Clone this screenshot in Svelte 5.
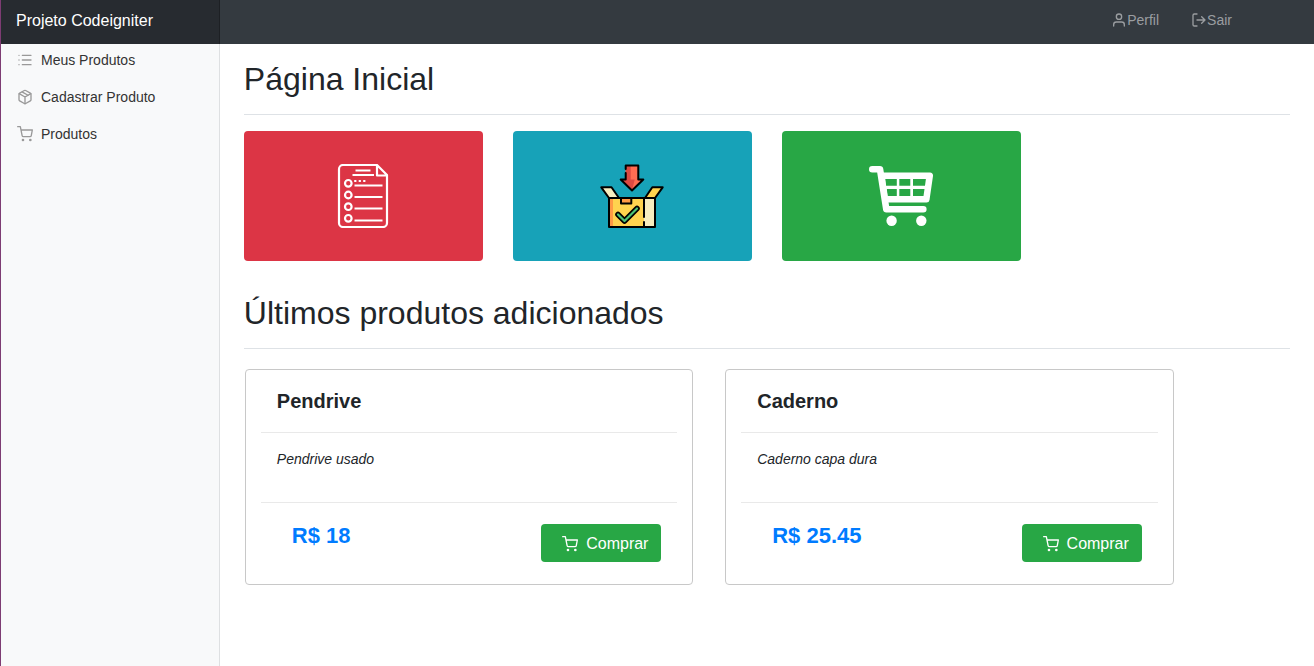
<script>
  const menu = [
    { label: 'Meus Produtos', icon: 'list' },
    { label: 'Cadastrar Produto', icon: 'package' },
    { label: 'Produtos', icon: 'cart' }
  ];
  const products = [
    { name: 'Pendrive', description: 'Pendrive usado', price: '18' },
    { name: 'Caderno', description: 'Caderno capa dura', price: '25.45' }
  ];
</script>

{#snippet icon(name)}
  <svg class="icon" viewBox="0 0 24 24" aria-hidden="true">
    {#if name === 'list'}
      <path d="M8 5h13M8 12h13M8 19h13M3 5h.01M3 12h.01M3 19h.01" />
    {:else if name === 'package'}
      <path d="M16.5 9.4 7.5 4.21M21 16V8a2 2 0 0 0-1-1.73l-7-4a2 2 0 0 0-2 0l-7 4A2 2 0 0 0 3 8v8a2 2 0 0 0 1 1.73l7 4a2 2 0 0 0 2 0l7-4A2 2 0 0 0 21 16z" />
      <path d="M3.27 6.96 12 12.01l8.73-5.05M12 22.08V12" />
    {:else if name === 'cart'}
      <circle cx="9" cy="21" r="1" />
      <circle cx="20" cy="21" r="1" />
      <path d="M1 1h4l2.68 13.39a2 2 0 0 0 2 1.61h9.72a2 2 0 0 0 2-1.61L23 6H6" />
    {:else if name === 'user'}
      <path d="M20 21v-2a4 4 0 0 0-4-4H8a4 4 0 0 0-4 4v2" />
      <circle cx="12" cy="7" r="4" />
    {:else if name === 'logout'}
      <path d="M9 21H5a2 2 0 0 1-2-2V5a2 2 0 0 1 2-2h4M16 17l5-5-5-5M21 12H9" />
    {/if}
  </svg>
{/snippet}

<div class="page">
  <header>
    <a class="brand" href="#inicio">Projeto Codeigniter</a>
    <nav class="account">
      <a href="#perfil">{@render icon('user')}Perfil</a>
      <a href="#sair">{@render icon('logout')}Sair</a>
    </nav>
  </header>

  <div class="body">
    <nav class="sidebar">
      {#each menu as item}
        <a href="#{item.icon}">{@render icon(item.icon)}{item.label}</a>
      {/each}
    </nav>

    <main>
      <h1>Página Inicial</h1>
      <div class="tiles">
        <a class="tile red" href="#list" aria-label="Meus Produtos">
          <svg viewBox="0 0 64 64" fill="none" stroke="#fff" stroke-width="2.200">
            <path d="M46 1H12a4 4 0 0 0-4 4v54a4 4 0 0 0 4 4h40a4 4 0 0 0 4-4V11L46 1v10.500h10" stroke-linejoin="round" />
            <path d="M24.500 6.500h15M21.500 11H43M23.500 21.500h28M23.500 33h28M23.500 44.500h28M23.500 56.500h28" />
            <path d="M23.200 17h2.200M27.700 17h2.200M32.200 17h2.200" />
            <circle cx="17.300" cy="19.300" r="3.300" />
            <circle cx="17.300" cy="31" r="3.300" />
            <circle cx="17.300" cy="42.700" r="3.300" />
            <circle cx="17.300" cy="54.300" r="3.300" />
          </svg>
        </a>
        <a class="tile blue" href="#package" aria-label="Cadastrar Produto">
          <svg viewBox="0 0 64 64" stroke-linejoin="round" stroke-linecap="round">
            <path d="M9 34h35v29H9z" fill="#ffd34f" />
            <path d="M9 34h4v29H9z" fill="#ff9a45" />
            <path d="M44 34h11v29H44z" fill="#f7edbf" />
            <path d="M25.700 1.500h12.600v14h5L32 26.500l-11.300-11h5z" fill="#ff6c52" />
            <path d="M25.700 1.500h5v14h4L32 26.500l-11.300-11h5z" fill="#dd4a42" />
            <g stroke="#000" stroke-width="2">
              <path d="M1.300 23.300h10.200L19 34H9z" fill="#f7edbf" />
              <path d="M52.300 23.300h10.400L55 34H45z" fill="#ffd34f" />
              <path d="M21 34h10.300v5.500H21z" fill="#ff9a45" />
              <path d="M25.700 5V1.500h12.600v14h5L32 26.500l-11.300-11h5V9M9 34v29h46V34zM44 34v19M44 58v5" fill="none" />
            </g>
            <path d="m18 50.500 6.500 6.500 12.500-12.500" fill="none" stroke="#000" stroke-width="5.600" />
            <path d="m18 50.500 6.500 6.500 12.500-12.500" fill="none" stroke="#4cc477" stroke-width="2.200" />
          </svg>
        </a>
        <a class="tile green" href="#cart" aria-label="Produtos">
          <svg viewBox="0 0 64 64">
            <path d="M3.300 5.300H11L17.300 45.300h37" fill="none" stroke="#fff" stroke-width="6.600" stroke-linejoin="round" stroke-linecap="round" />
            <path fill="#fff" fill-rule="evenodd" d="M12 8.500h49a3 3 0 0 1 3 3.400L60.500 36a3 3 0 0 1-3 2.500H16zM16.300 15l.8 6.700h10.700V15zM30.300 15v6.700h11V15zM44 15v6.700h12l.9-6.700zM17.800 25l.9 7h9.100v-7zM30.300 25v7h11v-7zM44 25v7h10.500l1-7z" />
            <circle cx="22.600" cy="56.700" r="5.200" fill="#fff" />
            <circle cx="52.300" cy="56.700" r="5.200" fill="#fff" />
          </svg>
        </a>
      </div>

      <h1>Últimos produtos adicionados</h1>
      <div class="products">
        {#each products as product}
          <article>
            <h2>{product.name}</h2>
            <p class="description">{product.description}</p>
            <div class="buy">
              <strong>R$ {product.price}</strong>
              <button type="button">{@render icon('cart')}Comprar</button>
            </div>
          </article>
        {/each}
      </div>
    </main>
  </div>
</div>

<style>
  :global(body) {
    margin: 0;
    background: #fff;
  }
  .page, .page * {
    box-sizing: border-box;
  }
  .page {
    min-height: 100vh;
    display: flex;
    flex-direction: column;
    border-left: 1px solid #7d3c73;
    font: 16px/24px "Liberation Sans", Arial, sans-serif;
    color: #212529;
  }
  a {
    color: inherit;
    text-decoration: none;
  }
  header {
    display: flex;
    height: 44px;
    background: #343a40;
  }
  .brand {
    width: 16.6667%;
    padding: 9px 15px;
    color: #fff;
    background: rgba(0, 0, 0, 0.25);
    box-shadow: inset -1px 0 0 rgba(0, 0, 0, 0.25);
  }
  .account {
    display: flex;
    gap: 32px;
    margin-left: auto;
    padding: 8px 82px 12px 0;
    color: #9a9da0;
    font-size: 14px;
  }
  .account a, .sidebar a {
    display: flex;
    align-items: center;
  }
  .icon {
    width: 16px;
    height: 16px;
    flex: none;
    fill: none;
    stroke: currentColor;
    stroke-width: 2;
    stroke-linecap: round;
    stroke-linejoin: round;
  }
  .body {
    display: flex;
    flex: 1;
  }
  .sidebar {
    width: 16.6667%;
    background: #f8f9fa;
    border-right: 1px solid #dee0e2;
  }
  .sidebar a {
    gap: 8px;
    height: 37px;
    padding: 0 16px 5px;
    color: #333;
    font-size: 14px;
  }
  .sidebar .icon {
    color: #999;
  }
  main {
    flex: 1;
    padding: 16px 24px 24px;
  }
  h1 {
    margin: 0 0 16px;
    padding-bottom: 16px;
    border-bottom: 1px solid #dee2e6;
    font-size: 32px;
    line-height: 38px;
    font-weight: 400;
  }
  .tiles {
    display: grid;
    grid-template-columns: repeat(4, 1fr);
    gap: 30px;
    margin-bottom: 33px;
  }
  .tile {
    height: 130px;
    display: flex;
    align-items: center;
    justify-content: center;
    border-radius: 4px;
  }
  .tile svg {
    width: 64px;
    height: 64px;
  }
  .red { background: #dc3545; }
  .blue { background: #17a2b8; }
  .green { background: #28a745; }
  .products {
    display: grid;
    grid-template-columns: repeat(2, 42.9%);
    gap: 32px;
    padding: 4px 0 0 1px;
  }
  article {
    padding: 15px;
    border: 1px solid #c8c8c8;
    border-radius: 4px;
  }
  h2 {
    margin: 0;
    padding: 4px 16px 19px;
    border-bottom: 1px solid #e9e9e9;
    font-size: 20px;
    line-height: 24px;
  }
  .description {
    margin: 0;
    padding: 16px 16px 32px;
    border-bottom: 1px solid #e9e9e9;
    font-size: 14px;
    line-height: 21px;
    font-style: italic;
  }
  .buy {
    display: flex;
    justify-content: space-between;
    align-items: flex-start;
    padding: 21px 16px 7px;
  }
  .buy strong {
    padding-left: 15px;
    color: #007bff;
    font-size: 22px;
  }
  button {
    display: flex;
    align-items: center;
    gap: 8px;
    width: 120px;
    height: 38px;
    padding: 2px 12px 0 21px;
    border: 0;
    border-radius: 4px;
    background: #28a745;
    color: #fff;
    font: inherit;
  }
</style>
